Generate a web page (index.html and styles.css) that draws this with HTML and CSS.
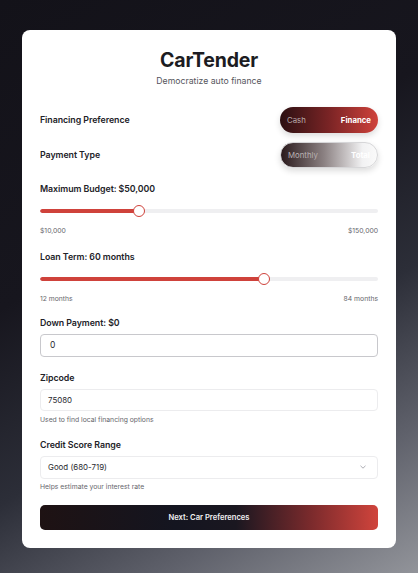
FILE: index.html
```html
<!DOCTYPE html>
<html>
<head>
<meta charset="utf-8">
<link rel="stylesheet" href="styles.css">
</head>
<body>
<div class="page">
  <div class="card">
    <div class="header">
      <h1 class="title">CarTender</h1>
      <p class="subtitle">Democratize auto finance</p>
    </div>

    <div class="row">
      <span class="label">Financing Preference</span>
      <div class="toggle toggle-red">
        <span class="opt">Cash</span>
        <span class="opt active">Finance</span>
      </div>
    </div>

    <div class="row row2">
      <span class="label">Payment Type</span>
      <div class="toggle toggle-light">
        <span class="opt">Monthly</span>
        <span class="opt active">Total</span>
      </div>
    </div>

    <div class="field slider-field first-slider">
      <span class="label">Maximum Budget: $50,000</span>
      <div class="slider">
        <div class="track"><div class="fill" style="width: 29.3%"></div></div>
        <div class="thumb" style="left: 29.3%"></div>
      </div>
      <div class="range-labels"><span>$10,000</span><span>$150,000</span></div>
    </div>

    <div class="field slider-field second-slider">
      <span class="label">Loan Term: 60 months</span>
      <div class="slider">
        <div class="track"><div class="fill" style="width: 66.3%"></div></div>
        <div class="thumb" style="left: 66.3%"></div>
      </div>
      <div class="range-labels"><span>12 months</span><span>84 months</span></div>
    </div>

    <div class="field down-field">
      <span class="label">Down Payment: $0</span>
      <div class="input input-strong">0</div>
    </div>

    <div class="field zip-field">
      <span class="label">Zipcode</span>
      <div class="input input-zip">75080</div>
      <span class="help">Used to find local financing options</span>
    </div>

    <div class="field credit-field">
      <span class="label">Credit Score Range</span>
      <div class="input select">
        <span>Good (680-719)</span>
        <svg class="chev" width="8" height="6" viewBox="0 0 8 6"><path d="M1.5 1.8 L4 4.2 L6.5 1.8" fill="none" stroke="#a4a4aa" stroke-width="0.9"/></svg>
      </div>
      <span class="help help-credit">Helps estimate your interest rate</span>
    </div>

    <button class="next">Next: Car Preferences</button>
  </div>
</div>
</body>
</html>
```

FILE: styles.css
```css
* { box-sizing: border-box; }
html, body { margin: 0; padding: 0; }
body {
  width: 418px;
  height: 573px;
  overflow: hidden;
  font-family: Inter, "Noto Sans", sans-serif;
  background: linear-gradient(150deg, #131219 0%, #17161e 38%, #2c2e38 62%, #5f616b 82%, #92949a 100%);
  color: #1d1d22;
}
.page {
  padding-top: 30px;
  display: flex;
  justify-content: center;
}
.card {
  width: 374px;
  height: 518px;
  background: #fff;
  border-radius: 8px;
  padding: 19px 18px 0 18px;
  display: flex;
  flex-direction: column;
}
.header { text-align: center; }
.title {
  margin: 0;
  font-size: 19.5px;
  font-weight: 700;
  letter-spacing: -0.2px;
  line-height: 22px;
  color: #1c1c22;
}
.subtitle {
  margin: 4px 0 0 0;
  font-size: 8.7px;
  line-height: 12px;
  color: #55555c;
}
.label {
  font-size: 8.8px;
  font-weight: 600;
  line-height: 12px;
  letter-spacing: -0.05px;
  color: #222228;
}
.row {
  display: flex;
  justify-content: space-between;
  align-items: center;
  margin-top: 20px;
}
.row2 { margin-top: 9px; }
.toggle {
  width: 98px;
  height: 26px;
  border-radius: 13px;
  display: flex;
  justify-content: space-between;
  align-items: center;
  padding: 0 7px;
  font-size: 7.8px;
  box-shadow: 0 3px 6px rgba(0,0,0,0.14);
}
.toggle-red {
  background: linear-gradient(90deg, #2b1012 0%, #7a2425 50%, #cf423b 100%);
}
.toggle-light {
  background: linear-gradient(90deg, #2a1a1c 0%, #8c8283 45%, #f2f2f3 85%, #fafafa 100%);
  border: 1px solid #d6d6d8;
}
.opt { color: #b8aaaa; }
.toggle-light .opt { color: #b9b2b3; }
.opt.active { color: #fff; font-weight: 700; }
.field {
  display: flex;
  flex-direction: column;
}
.first-slider { margin-top: 15px; }
.second-slider { margin-top: 15.5px; }
.down-field { margin-top: 14px; }
.zip-field { margin-top: 15px; }
.credit-field { margin-top: 14.5px; }
.slider {
  position: relative;
  height: 12px;
  margin-top: 10px;
  display: flex;
  align-items: center;
}
.track {
  width: 100%;
  height: 4px;
  border-radius: 2px;
  background: #efeff1;
  overflow: hidden;
}
.fill {
  height: 100%;
  background: #cf423b;
  border-radius: 2px;
}
.thumb {
  position: absolute;
  top: 0;
  width: 12px;
  height: 12px;
  margin-left: -6px;
  border-radius: 50%;
  background: #fff;
  border: 1.5px solid #cf423b;
}
.range-labels {
  display: flex;
  justify-content: space-between;
  margin-top: 9px;
  font-size: 6.8px;
  line-height: 9px;
  color: #66666c;
}
.input {
  margin-top: 5px;
  height: 23px;
  border: 1px solid #ececee;
  border-radius: 4px;
  padding: 0 7px;
  display: flex;
  align-items: center;
  font-size: 7.9px;
  color: #2a2a30;
}
.input-zip { height: 22px; }
.input-strong {
  border-color: #c8c8cc;
  padding-left: 9px;
  font-size: 8.5px;
}
.select { justify-content: space-between; padding-right: 10px; }
.help {
  margin-top: 4.5px;
  font-size: 6.8px;
  line-height: 9px;
  color: #66666c;
}
.help-credit { margin-top: 3.5px; }
.next {
  margin-top: 14px;
  height: 25px;
  border: none;
  border-radius: 5px;
  font-family: inherit;
  font-size: 7.6px;
  font-weight: 600;
  color: #f0f0f2;
  background: linear-gradient(90deg, #1e1213 0%, #141520 40%, #1a1720 58%, #7a2a2c 80%, #d0443c 100%);
}
```
